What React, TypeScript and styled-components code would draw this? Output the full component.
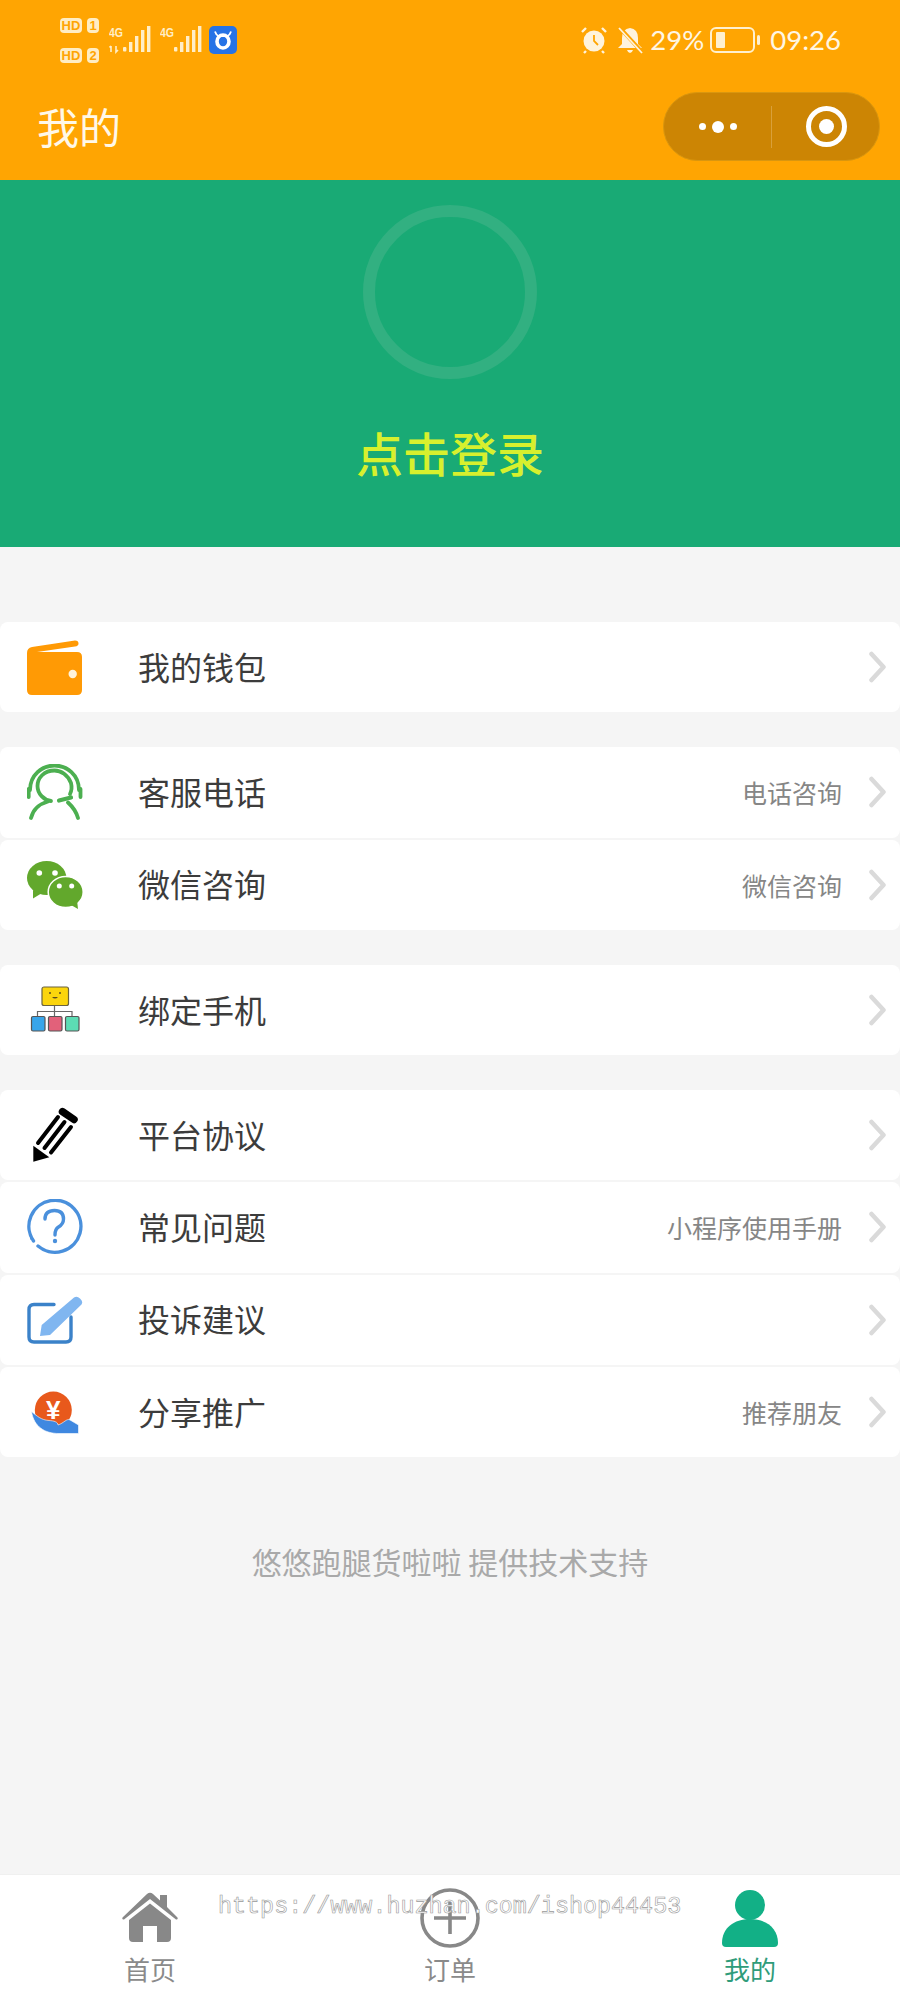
import React from "react";
import styled, { createGlobalStyle } from "styled-components";

const Global = createGlobalStyle`
  html, body { margin: 0; padding: 0; background: #f5f5f5; }
  * { box-sizing: border-box; }
  body { font-family: "Noto Sans CJK SC", "Noto Sans", sans-serif; }
`;

const Page = styled.div`
  position: relative;
  width: 900px;
  height: 2000px;
  display: flex;
  flex-direction: column;
  background: #f5f5f5;
  overflow: hidden;
`;
const Header = styled.header`
  height: 180px;
  flex: none;
  background: #ffa502;
  color: #fff6e3;
  display: flex;
  flex-direction: column;
`;
const StatusBar = styled.div`
  height: 80px;
  padding: 0 59px 0 60px;
  display: flex;
  align-items: center;
  justify-content: space-between;
`;
const StatusSide = styled.div`
  display: flex;
  align-items: center;
`;
const SimColumn = styled.div`
  display: flex;
  flex-direction: column;
  gap: 15px;
  margin-right: 10px;
`;
const SimRow = styled.div`
  display: flex;
  gap: 5px;
`;
const SimBadge = styled.span`
  height: 15px;
  padding: 0 1px;
  min-width: ${(p: { $w: number }) => p.$w}px;
  border-radius: 4px;
  background: #ffedc4;
  color: #ffa502;
  font: 700 13px/15px "Liberation Sans", sans-serif;
  text-align: center;
`;
const SignalWrap = styled.svg`
  display: block;
  margin-right: ${(p: { $gap: number }) => p.$gap}px;
`;
const StatusText = styled.span`
  font: 400 27.5px/1 Lato, "Noto Sans", sans-serif;
  color: #fff6e3;
`;
const Percent = styled(StatusText)`
  margin: 0 6px 0 6px;
`;
const Clock = styled(StatusText)`
  margin-left: 11px;
`;
const Battery = styled.div`
  position: relative;
  width: 45px;
  height: 26px;
  border: 2px solid #fff0cf;
  border-radius: 6px;
  padding: 3px 4px;
  margin-right: 4px;
  &::after {
    content: "";
    position: absolute;
    right: -7px;
    top: 6px;
    width: 3px;
    height: 10px;
    background: #fff0cf;
    border-radius: 2px;
  }
`;
const BatteryFill = styled.div`
  width: 9px;
  height: 100%;
  background: #fff0cf;
  border-radius: 1px;
`;
const NavBar = styled.div`
  flex: 1;
  padding: 0 20px 7px 37px;
  display: flex;
  align-items: center;
  justify-content: space-between;
`;
const NavTitle = styled.h1`
  margin: 0;
  font-size: 42px;
  font-weight: 400;
  line-height: 1.2;
  color: #fff8e8;
`;
const Capsule = styled.div`
  width: 217px;
  height: 69px;
  border-radius: 35px;
  background: #cc8504;
  border: 1px solid #d9960f;
  display: flex;
  align-items: center;
`;
const CapsuleSide = styled.div`
  width: 107px;
  flex: none;
  display: flex;
  align-items: center;
  justify-content: center;
`;
const CapsuleDivider = styled.div`
  width: 1px;
  height: 42px;
  flex: none;
  background: #d9a03a;
`;
const Dots = styled.div`
  display: flex;
  align-items: center;
  gap: 6px;
  margin-left: 1px;
`;
const Dot = styled.span`
  width: ${(p: { $size: number }) => p.$size}px;
  height: ${(p: { $size: number }) => p.$size}px;
  border-radius: 50%;
  background: #fff;
`;
const Target = styled.div`
  width: 41px;
  height: 41px;
  border: 5px solid #fff;
  border-radius: 50%;
  display: flex;
  align-items: center;
  justify-content: center;
  margin-left: 2px;
  &::after {
    content: "";
    width: 15px;
    height: 15px;
    border-radius: 50%;
    background: #fff;
  }
`;
const Hero = styled.section`
  height: 367px;
  flex: none;
  background: #19aa75;
  display: flex;
  flex-direction: column;
  align-items: center;
  padding-top: 25px;
`;
const Avatar = styled.div`
  width: 174px;
  height: 174px;
  border-radius: 50%;
  border: 12px solid #32b081;
`;
const LoginText = styled.div`
  margin-top: 39px;
  font-size: 47px;
  font-weight: 500;
  line-height: 68px;
  color: #d7f02e;
`;
const Main = styled.main`
  flex: 1;
  padding-top: 75px;
  display: flex;
  flex-direction: column;
  gap: 35px;
`;
const Group = styled.div`
  display: flex;
  flex-direction: column;
  gap: 2px;
`;
const Row = styled.div`
  height: 90.25px;
  padding: 0 14px 0 27px;
  background: #fff;
  border-radius: 8px;
  display: flex;
  align-items: center;
`;
const IconBox = styled.svg`
  display: block;
  width: 56px;
  height: 56px;
  flex: none;
  margin-right: 55px;
`;
const RowLabel = styled.span`
  flex: 1;
  font-size: 32px;
  line-height: 1.2;
  color: #3c3c3c;
  padding-bottom: 2px;
`;
const RowHint = styled.span`
  font-size: 25px;
  line-height: 1.2;
  color: #868686;
  margin-right: 27px;
`;
const Chevron = styled.svg`
  display: block;
  width: 17px;
  height: 32px;
  flex: none;
`;
const Footer = styled.div`
  margin-top: 51px;
  text-align: center;
  font-size: 30px;
  line-height: 1.2;
  color: #a9a9a9;
`;
const TabBar = styled.nav`
  height: 126px;
  flex: none;
  background: #fff;
  display: flex;
  padding-top: 13px;
  border-top: 1px solid #f0f0f0;
`;
const Tab = styled.div`
  flex: 1;
  display: flex;
  flex-direction: column;
  align-items: center;
`;
const TabIcon = styled.svg`
  display: block;
  width: 60px;
  height: 60px;
`;
const TabLabel = styled.span<{ $active?: boolean }>`
  margin-top: 6px;
  font-size: 26px;
  line-height: 30px;
  color: ${(p) => (p.$active ? "#2f9c7a" : "#8a8a8a")};
`;
const Watermark = styled.div`
  position: absolute;
  left: 218px;
  top: 1892px;
  font: 400 23.4px/30px "Liberation Mono", monospace;
  color: #fff;
  -webkit-text-stroke: 0.6px #999;
  white-space: nowrap;
`;

const Signal = ({ arrows, gap }: { arrows?: boolean; gap: number }) => (
  <SignalWrap $gap={gap} width="42" height="28" viewBox="0 0 42 28">
    <text x="0" y="11" fontFamily="Liberation Sans, sans-serif" fontWeight="700" fontSize="13" fill="#ffeec8" textLength="14" lengthAdjust="spacingAndGlyphs">4G</text>
    {arrows && <path d="M2 20v6M0.500 21.500l1.500-1.500M7 20v6l2-2" stroke="#ffeec8" strokeWidth="1.600" fill="none" />}
    <rect x="14" y="21" width="3.400" height="4.500" rx="1" fill="#ffeec8" />
    <rect x="20" y="16" width="3.400" height="10" fill="#ffeec8" />
    <rect x="26" y="10" width="3.400" height="16" fill="#ffeec8" />
    <rect x="32" y="4" width="3.400" height="22" fill="#ffeec8" />
    <rect x="38" y="0" width="3.400" height="26" fill="#ffeec8" />
  </SignalWrap>
);

const ChevronIcon = () => (
  <Chevron viewBox="0 0 17 32">
    <path d="M2.500 3l12 13-12 13" fill="none" stroke="#dadada" strokeWidth="4.500" strokeLinecap="round" strokeLinejoin="round" />
  </Chevron>
);

const Wallet = () => (
  <IconBox viewBox="0 0 56 56">
    <path d="M0 14Q0 9 5 8L48 1.500Q51.500 1.500 51.500 4.500Q51.500 7 48 7.500L10 13H50Q55 13 55 18V51Q55 56 50 56H5Q0 56 0 51Z" fill="#ff9a05" />
    <circle cx="45.700" cy="35" r="4.200" fill="#fff3dc" />
  </IconBox>
);
const Service = () => (
  <IconBox viewBox="0 0 56 56">
    <g fill="none" stroke="#4caf50" strokeWidth="3.800" strokeLinecap="round">
      <path d="M3 26C3 11 15 1.500 27.500 1.500S52 11 52 26" />
      <path d="M43 30C45 26 44.500 21 44 19C41 11 34 6.500 27.500 6.500C17 6.500 10.500 14 10.500 22C10.500 30 17 36 24 37" />
      <path d="M32 36.500L44 33.500" strokeWidth="4.200" />
      <path d="M4 54C6 46 12 40 21 37.500" />
      <path d="M51 54C49 47 46 43 41 38.500" />
      <path d="M1.700 25V33M53.500 25V33" strokeWidth="3.800" />
    </g>
  </IconBox>
);
const WeChat = () => (
  <IconBox viewBox="0 0 56 56">
    <ellipse cx="19.700" cy="21" rx="19.700" ry="17" fill="#62a82c" />
    <path d="M6 33L6 41.500L15 36Z" fill="#62a82c" />
    <ellipse cx="38.700" cy="35" rx="17.500" ry="15.500" fill="#62a82c" stroke="#fff" strokeWidth="1.500" />
    <path d="M44 48L51 52L50 43Z" fill="#62a82c" />
    <circle cx="12.300" cy="16" r="2.800" fill="#fff" />
    <circle cx="28" cy="16" r="2.800" fill="#fff" />
    <circle cx="32.300" cy="29" r="2.500" fill="#fff" />
    <circle cx="44.700" cy="29" r="2.500" fill="#fff" />
  </IconBox>
);
const OrgChart = () => (
  <IconBox viewBox="0 0 56 56">
    <rect x="15" y="5" width="26.500" height="18.500" rx="2" fill="#fbd50d" stroke="#6b6340" strokeWidth="1.200" />
    <circle cx="23" cy="11" r="1" fill="#5a4a20" />
    <circle cx="33" cy="11" r="1" fill="#5a4a20" />
    <path d="M25 15Q28 18 31 15" fill="#5a4a20" />
    <path d="M27.500 24V35M10.500 35V29.500H45V35" fill="none" stroke="#666" strokeWidth="1.200" />
    <rect x="4.500" y="34.500" width="13.500" height="14.500" rx="1.500" fill="#38a5ea" stroke="#555" strokeWidth="1.200" />
    <rect x="21.500" y="34.500" width="13.500" height="14.500" rx="1.500" fill="#e2617a" stroke="#555" strokeWidth="1.200" />
    <rect x="38.500" y="34.500" width="13.500" height="14.500" rx="1.500" fill="#5cdcb4" stroke="#555" strokeWidth="1.200" />
  </IconBox>
);
const Pencil = () => (
  <IconBox viewBox="0 0 56 56">
    <path d="M6.300 38.700L6.300 54.700L22.300 50.300Z" fill="#000" />
    <g fill="none" stroke="#000" strokeLinecap="round">
      <path d="M11 36L31 10M17.500 41L37.500 15M24 45.500L44 20" strokeWidth="4" />
      <path d="M35.500 4.700L47 12.500" strokeWidth="7.500" />
    </g>
  </IconBox>
);
const Question = () => (
  <IconBox viewBox="0 0 56 56">
    <path d="M6.500 42A26 26 0 1 1 11 47" fill="none" stroke="#4a90dc" strokeWidth="3.400" strokeLinecap="round" />
    <circle cx="4.600" cy="39.500" r="1.500" fill="#4a90dc" />
    <path d="M18 20Q18 11.500 27.500 11.500Q36.500 11.500 36.500 20Q36.500 25 31.500 28Q28 30 28 36" fill="none" stroke="#4a90dc" strokeWidth="3.400" strokeLinecap="round" />
    <circle cx="28" cy="42" r="2.200" fill="#4a90dc" />
  </IconBox>
);
const Edit = () => (
  <IconBox viewBox="0 0 56 56">
    <path d="M27 12.500H7Q2 12.500 2 17.500V45Q2 50 7 50H39Q44 50 44 45V25" fill="none" stroke="#3b82c9" strokeWidth="3.400" strokeLinecap="round" />
    <path d="M14.700 33L47 5.500Q50 3.500 53 6.500Q56.500 9.500 54.500 12.500L23 43L13 44Z" fill="#80b6f0" />
  </IconBox>
);
const Share = () => (
  <IconBox viewBox="0 0 56 56">
    <circle cx="26.300" cy="26" r="18.500" fill="#e8591c" />
    <text x="26.300" y="35" textAnchor="middle" fontFamily="Liberation Sans, sans-serif" fontWeight="700" fontSize="26" fill="#fff">¥</text>
    <path d="M4.500 27.500C10 32 14 36 22 36.500C27 36.800 31 38 31 41C37 39 40 34 43 36L51.500 41V49.500H32C18 49.500 7 43 4.500 27.500Z" fill="#3f88e0" stroke="#fff" strokeWidth="0.600" />
  </IconBox>
);

type Item = { icon: React.ReactNode; label: string; hint?: string };
const groups: Item[][] = [
  [{ icon: <Wallet />, label: "我的钱包" }],
  [
    { icon: <Service />, label: "客服电话", hint: "电话咨询" },
    { icon: <WeChat />, label: "微信咨询", hint: "微信咨询" },
  ],
  [{ icon: <OrgChart />, label: "绑定手机" }],
  [
    { icon: <Pencil />, label: "平台协议" },
    { icon: <Question />, label: "常见问题", hint: "小程序使用手册" },
    { icon: <Edit />, label: "投诉建议" },
    { icon: <Share />, label: "分享推广", hint: "推荐朋友" },
  ],
];

export default function App() {
  return (
    <Page>
      <Global />
      <Header>
        <StatusBar>
          <StatusSide>
            <SimColumn>
              <SimRow>
                <SimBadge $w={22}>HD</SimBadge>
                <SimBadge $w={12}>1</SimBadge>
              </SimRow>
              <SimRow>
                <SimBadge $w={22}>HD</SimBadge>
                <SimBadge $w={12}>2</SimBadge>
              </SimRow>
            </SimColumn>
            <Signal arrows gap={9} />
            <Signal gap={7} />
            <svg width="28" height="28" viewBox="0 0 28 28">
              <rect width="28" height="28" rx="5" fill="#2673e6" />
              <path d="M6 5.500Q7 9 9.500 10H18.500Q21 9 22 5.500" fill="none" stroke="#fff" strokeWidth="1.800" />
              <ellipse cx="14" cy="15.500" rx="6" ry="6.500" fill="none" stroke="#fff" strokeWidth="3.600" />
            </svg>
          </StatusSide>
          <StatusSide>
            <svg width="28" height="28" viewBox="0 0 28 28" style={{ marginRight: 8 }}>
              <circle cx="14" cy="15" r="10.500" fill="#fff3dc" />
              <path d="M14 9V15L18 19" fill="none" stroke="#ffa502" strokeWidth="1.800" />
              <path d="M2 6L6 2M26 6L22 2M6 25L4 27M22 25L24 27" stroke="#fff3dc" strokeWidth="2.400" />
            </svg>
            <svg width="28" height="28" viewBox="0 0 28 28">
              <path d="M14 2Q22 3 22 12V18L26 22H2L6 18V12Q6 3 14 2Z" fill="#fff3dc" />
              <path d="M11 24H17Q16 27 14 27Q12 27 11 24Z" fill="#fff3dc" />
              <path d="M3 1L26 26" stroke="#ffa502" strokeWidth="4" />
              <path d="M3 2L26 27" stroke="#fff3dc" strokeWidth="1.800" />
            </svg>
            <Percent>29%</Percent>
            <Battery>
              <BatteryFill />
            </Battery>
            <Clock>09:26</Clock>
          </StatusSide>
        </StatusBar>
        <NavBar>
          <NavTitle>我的</NavTitle>
          <Capsule>
            <CapsuleSide>
              <Dots>
                <Dot $size={7} />
                <Dot $size={12} />
                <Dot $size={7} />
              </Dots>
            </CapsuleSide>
            <CapsuleDivider />
            <CapsuleSide>
              <Target />
            </CapsuleSide>
          </Capsule>
        </NavBar>
      </Header>
      <Hero>
        <Avatar />
        <LoginText>点击登录</LoginText>
      </Hero>
      <Main>
        {groups.map((g, i) => (
          <Group key={i}>
            {g.map((item) => (
              <Row key={item.label}>
                {item.icon}
                <RowLabel>{item.label}</RowLabel>
                {item.hint && <RowHint>{item.hint}</RowHint>}
                <ChevronIcon />
              </Row>
            ))}
          </Group>
        ))}
        <Footer>悠悠跑腿货啦啦 提供技术支持</Footer>
      </Main>
      <TabBar>
        <Tab>
          <TabIcon viewBox="0 0 60 60">
            <path d="M2.500 29.500L27 6Q30 3.500 33 6L40 12.500V7H47V19L57.500 29.500Q58.500 32 56 31.500L30 11L4 31.500Q1.500 32 2.500 29.500Z" fill="#888" />
            <path d="M30 15.500L9 32V50Q9 54 13 54H23V38H37V54H47Q51 54 51 50V32Z" fill="#888" />
          </TabIcon>
          <TabLabel>首页</TabLabel>
        </Tab>
        <Tab>
          <TabIcon viewBox="0 0 60 60">
            <circle cx="30" cy="30" r="28" fill="#fff" stroke="#888" strokeWidth="3.600" />
            <path d="M14 30H46M30 14V46" fill="none" stroke="#888" strokeWidth="3.600" />
          </TabIcon>
          <TabLabel>订单</TabLabel>
        </Tab>
        <Tab>
          <TabIcon viewBox="0 0 60 60">
            <circle cx="30" cy="17" r="15" fill="#12b086" />
            <path d="M2 55C2 40 14 31 30 31S58 40 58 55Q58 59 54 59H6Q2 59 2 55Z" fill="#12b086" />
          </TabIcon>
          <TabLabel $active>我的</TabLabel>
        </Tab>
      </TabBar>
      <Watermark>https://www.huzhan.com/ishop44453</Watermark>
    </Page>
  );
}
